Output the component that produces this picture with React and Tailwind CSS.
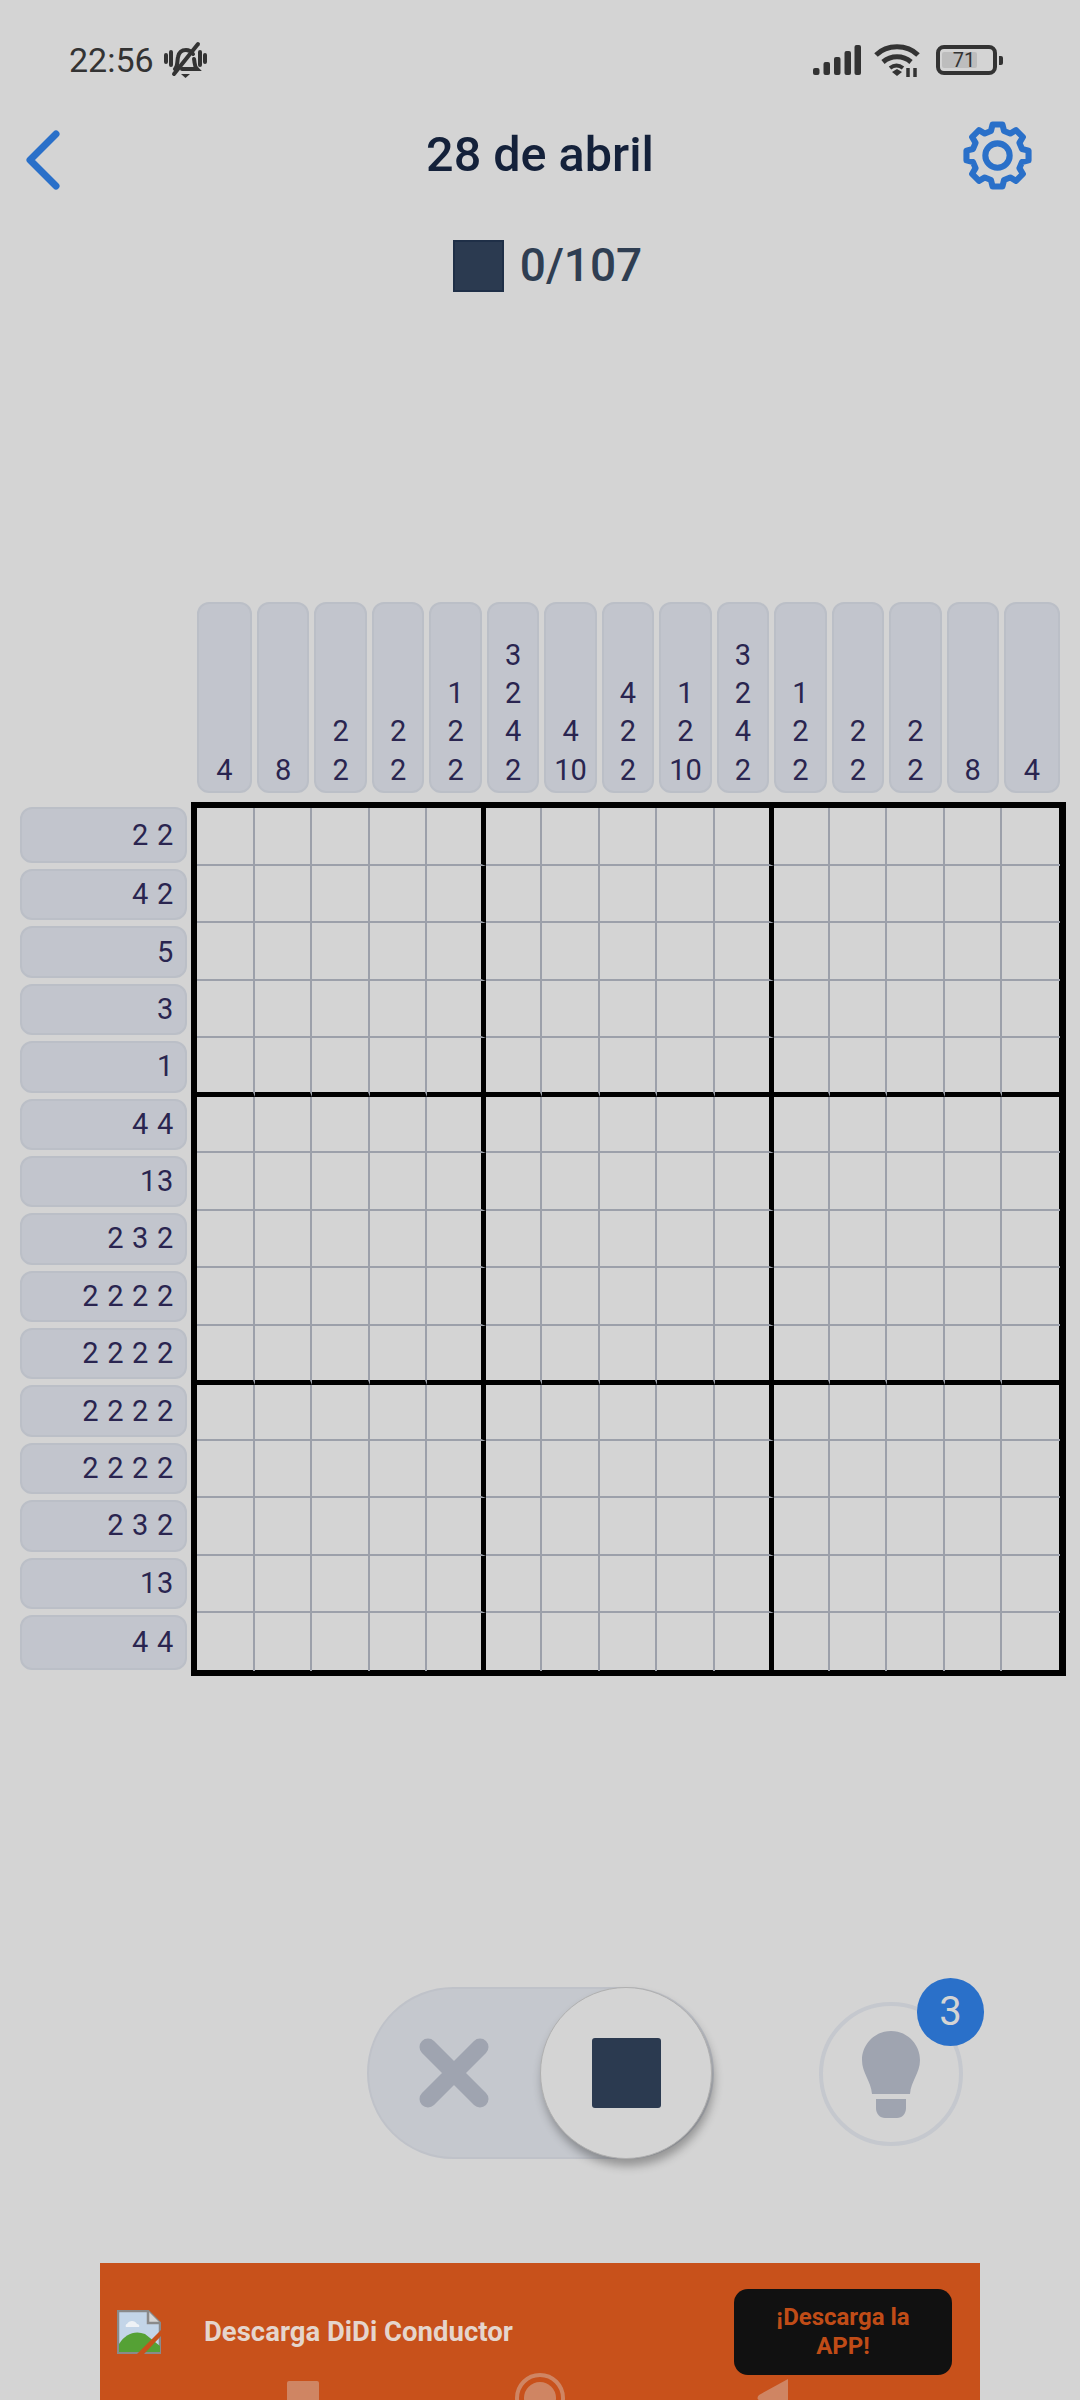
import React from 'react';

const colClues = [
  [4], [8], [2, 2], [2, 2], [1, 2, 2], [3, 2, 4, 2], [4, 10], [4, 2, 2],
  [1, 2, 10], [3, 2, 4, 2], [1, 2, 2], [2, 2], [2, 2], [8], [4],
];

const rowClues = [
  '2 2', '4 2', '5', '3', '1', '4 4', '13', '2 3 2', '2 2 2 2', '2 2 2 2',
  '2 2 2 2', '2 2 2 2', '2 3 2', '13', '4 4',
];

const gearPath = (() => {
  const pts = [];
  const at = (r, deg) => {
    const t = ((deg - 90) * Math.PI) / 180;
    return `${(36 + r * Math.cos(t)).toFixed(2)} ${(36 + r * Math.sin(t)).toFixed(2)}`;
  };
  for (let i = 0; i < 8; i++) {
    const a = i * 45;
    pts.push(at(25, a - 15), at(31, a - 9), at(31, a + 9), at(25, a + 15));
  }
  return `M${pts.join('L')}Z`;
})();

function StatusBar() {
  return (
    <div className="flex h-[40px] items-center justify-between pl-[69px] pr-[77px] text-[#333333]">
      <div className="flex items-center gap-[10px]">
        <span className="text-[34px] leading-none">22:56</span>
        <svg width="43" height="38" viewBox="0 0 43 38" fill="none" stroke="#333333" strokeWidth="4" strokeLinecap="round">
          <path d="M2 14v7M7 11v13M36 11v13M41 14v7" />
          <path d="M11 28c3-3 2-8 3-12 1-5 4-7 8-7 3 0 5 1 7 4M30 18c1 4 0 7 3 10H18" />
          <path d="M10 33 34 3" />
          <path d="M17 33h9l-4.500 4z" fill="#333333" stroke="none" />
        </svg>
      </div>
      <div className="flex items-center">
        <svg width="48" height="30" viewBox="0 0 48 30" fill="#333333">
          <rect x="0" y="23" width="6.500" height="7" rx="2" />
          <rect x="10.500" y="17" width="6.500" height="13" rx="2" />
          <rect x="21" y="12" width="6.500" height="18" rx="2" />
          <rect x="31.500" y="6" width="6.500" height="24" rx="2" />
          <rect x="41.500" y="0" width="6.500" height="30" rx="2" />
        </svg>
        <svg className="ml-[13px]" width="46" height="34" viewBox="0 0 46 34" fill="none" stroke="#333333" strokeWidth="5">
          <path d="M2 12C13 1 33 1 44 12" />
          <path d="M9 19c8-7 20-7 28 0" />
          <path d="M16 25c4-3 9-3 13 0" strokeWidth="4" />
          <path d="M18 29l5-3 5 3-5 4z" fill="#333333" stroke="none" />
          <path d="M34 25v9M41 25v9" strokeWidth="3.500" />
        </svg>
        <div className="ml-[16px] flex items-center gap-[2px]">
          <div className="relative h-[30px] w-[61px] rounded-[8px] border-[4px] border-[#333333]">
            <div className="absolute left-[2px] top-[3px] h-[16px] w-[35px] rounded-[2px] bg-[#bdbdbd]" />
            <span className="absolute inset-0 flex items-center justify-center pr-[5px] text-[20px] leading-none">71</span>
          </div>
          <div className="h-[9px] w-[4px] rounded-r-[2px] bg-[#333333]" />
        </div>
      </div>
    </div>
  );
}

function Header() {
  return (
    <div className="mt-[39px] grid h-[69px] grid-cols-[1fr_auto_1fr] items-center px-[46px]">
      <svg className="ml-[-20px] mt-[9px]" width="34" height="60" viewBox="0 0 34 60" fill="none" stroke="#2a70c9" strokeWidth="7" strokeLinecap="round" strokeLinejoin="round">
        <path d="M30 4 4 30l26 26" />
      </svg>
      <h1 className="text-[48.500px] font-medium leading-none text-[#14213a]">28 de abril</h1>
      <svg className="justify-self-end" width="73" height="73" viewBox="0 0 72 72" fill="none" stroke="#2a70c9" strokeWidth="6" strokeLinejoin="round">
        <path d={gearPath} />
        <circle cx="36" cy="36" r="12" />
      </svg>
    </div>
  );
}

function ColumnClues() {
  return (
    <div className="mt-[310px] grid h-[191px] grid-cols-[55px_repeat(13,1fr)_56px] gap-x-[5px] pl-[197px] pr-[20px]">
      {colClues.map((nums, i) => (
        <div key={i} className="flex flex-col items-center justify-end rounded-[12px] border-2 border-[#bbbfc7] bg-[#c2c5cd] pb-[2px]">
          {nums.map((n, j) => (
            <span key={j} className="text-[29px] leading-[38.3px] text-[#2a2550]">{n}</span>
          ))}
        </div>
      ))}
    </div>
  );
}

function RowClues() {
  return (
    <div className="mt-[5px] grid h-[863px] w-[167px] grid-rows-[56px_repeat(13,1fr)_55px] gap-y-[6px]">
      {rowClues.map((text, i) => (
        <div key={i} className="flex items-center justify-end rounded-[12px] border-2 border-[#bbbfc7] bg-[#c2c5cd] pr-[11px]">
          <span className="text-[29px] leading-none tracking-[0.7px] text-[#2a2550]">{text}</span>
        </div>
      ))}
    </div>
  );
}

function Board() {
  const cells = [];
  for (let r = 0; r < 15; r++) {
    for (let c = 0; c < 15; c++) {
      const right = c === 14 ? '' : c % 5 === 4 ? 'border-r-[5px] border-r-black' : 'border-r-2 border-r-[#9ca0aa]';
      const bottom = r === 14 ? '' : r % 5 === 4 ? 'border-b-[5px] border-b-black' : 'border-b-2 border-b-[#9ca0aa]';
      cells.push(<div key={`${r}-${c}`} className={`${right} ${bottom}`} />);
    }
  }
  return (
    <div className="ml-[4px] grid h-[874px] w-[875px] grid-cols-[repeat(4,57.5px)_59px_56px_repeat(3,57.5px)_59px_56px_repeat(4,57.5px)] grid-rows-[repeat(4,57.5px)_59px_56px_repeat(3,57.5px)_59px_56px_repeat(4,57.5px)] border-[6px] border-r-[7px] border-black">
      {cells}
    </div>
  );
}

function Controls() {
  return (
    <div className="mt-[311px] flex items-start pl-[367px]">
      <div className="flex h-[172px] w-[347px] items-center justify-between rounded-full border-2 border-[#bfc2c9] bg-[#c5c8ce]">
        <svg className="ml-[49px]" width="72" height="72" viewBox="0 0 72 72" fill="none" stroke="#9fa4b0" strokeWidth="17" strokeLinecap="round">
          <path d="M10 10 62 62M62 10 10 62" />
        </svg>
        <div className="flex h-[172px] w-[172px] shrink-0 items-center justify-center rounded-full border border-[#b0b0b0] bg-[#d4d4d4] shadow-[2px_7px_10px_rgba(0,0,0,0.3)]">
          <div className="h-[70px] w-[69px] rounded-[3px] bg-[#2b3a50]" />
        </div>
      </div>
      <div className="relative ml-[105px] mt-[15px] flex h-[144px] w-[144px] items-center justify-center rounded-full border-4 border-[#c5c8ce]">
        <svg width="58" height="87" viewBox="0 0 58 87" fill="#9fa4b0">
          <path d="M29 0C13 0 0 13 0 29c0 13 9 21 10 34h38c1-13 10-21 10-34C58 13 45 0 29 0z" />
          <path d="M14 68h30v9c0 6-4 10-9 10H23c-5 0-9-4-9-10z" />
        </svg>
        <div className="absolute right-[-25px] top-[-28px] flex h-[68px] w-[67px] items-center justify-center rounded-full bg-[#2a70c9] text-[40px] leading-none text-[#d4d4d4]">3</div>
      </div>
    </div>
  );
}

function AdBanner() {
  return (
    <div className="relative ml-[100px] mt-[104px] flex h-[137px] w-[880px] items-start overflow-hidden bg-[#c8511b] pl-[17px] pr-[28px] pt-[26px]">
      <svg className="mt-[21px]" width="44" height="44" viewBox="0 0 44 44">
        <path d="M1 1h30l12 12v30H1z" fill="#c3d5e8" stroke="#8a8a8a" strokeWidth="2.500" />
        <path d="M31 1v12h12" fill="#d4d4d4" stroke="#8a8a8a" strokeWidth="2.500" />
        <path d="M10 14c2-4 8-4 10 0 2 0 3 2 2 3H9c-1-1 0-3 1-3z" fill="#eef2f6" />
        <path d="M2 42V34c6-10 16-14 26-10l15 12v6z" fill="#55a135" />
        <path d="M20 44 44 20v6L27 44z" fill="#c8511b" />
      </svg>
      <span className="ml-[43px] mt-[27px] text-[27.500px] font-bold leading-[32px] text-[#e5d5cc]">Descarga DiDi Conductor</span>
      <div className="ml-auto flex h-[86px] w-[218px] items-center justify-center rounded-[14px] bg-[#111111] text-center text-[24px] font-bold leading-[29px] text-[#c04c17]">
        ¡Descarga la<br />APP!
      </div>
      {/* system nav keys showing through the banner */}
      <div className="absolute left-[187px] top-[118px] h-[32px] w-[32px] rounded-[2px] bg-[#cf8563]" />
      <div className="absolute left-[415px] top-[110px] flex h-[50px] w-[50px] items-center justify-center rounded-full border-[4px] border-[#cf8563]">
        <div className="h-[32px] w-[32px] rounded-full bg-[#cf8563]" />
      </div>
      <svg className="absolute left-[657px] top-[116px]" width="31" height="40" viewBox="0 0 31 40" fill="#cf8563">
        <path d="M31 0v40L2 21c-2-1-2-3 0-5z" />
      </svg>
    </div>
  );
}

export default function App() {
  return (
    <div className="h-[2400px] w-[1080px] overflow-hidden bg-[#d4d4d4] pt-[40px] font-['Roboto',sans-serif]">
      <StatusBar />
      <Header />
      <div className="mt-[52px] flex h-[52px] items-center justify-center gap-[16px] pl-[15px]">
        <div className="h-[52px] w-[51px] border-2 border-[#1f2f47] bg-[#2b3a50]" />
        <span className="mt-[-3px] text-[46px] font-medium leading-none text-[#2f3e52]">0/107</span>
      </div>
      <ColumnClues />
      <div className="mt-[9px] flex items-start pl-[20px]">
        <RowClues />
        <Board />
      </div>
      <Controls />
      <AdBanner />
    </div>
  );
}
